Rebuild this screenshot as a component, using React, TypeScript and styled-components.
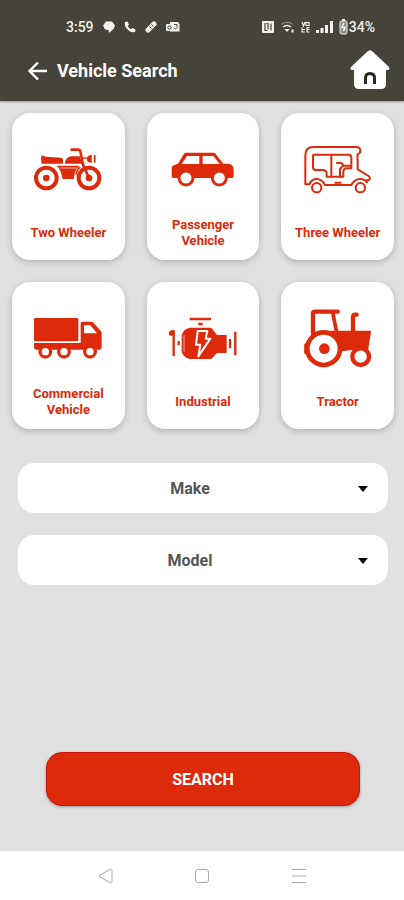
import React from "react";
import styled, { createGlobalStyle } from "styled-components";

const RED = "#dc2a0a";

const GlobalStyle = createGlobalStyle`
  *, *::before, *::after { box-sizing: border-box; }
  body { margin: 0; font-family: Roboto, "Liberation Sans", sans-serif; }
  button, select { font-family: inherit; }
`;

const Screen = styled.div`
  display: flex;
  flex-direction: column;
  min-height: 100vh;
  background: #e1e1e1;
`;

const Header = styled.header`
  background: #46433b;
  color: #fff;
  padding-top: 16px;
  box-shadow: 0 1px 2px rgba(0, 0, 0, 0.35);
`;

const StatusBar = styled.div`
  display: flex;
  align-items: center;
  justify-content: space-between;
  height: 22px;
  padding: 0 29px 0 66px;
  font-size: 14px;
  font-weight: 500;
  color: #f3f2ee;
`;

const StatusGroup = styled.div<{ $gap: number }>`
  display: flex;
  align-items: center;
  gap: ${(p) => p.$gap}px;
`;

const TitleBar = styled.div`
  display: flex;
  align-items: center;
  height: 63px;
  padding: 0 14px 0 24px;
`;

const IconButton = styled.button`
  display: flex;
  align-items: center;
  justify-content: center;
  padding: 0;
  border: 0;
  background: none;
  color: inherit;
  cursor: pointer;
`;

const Title = styled.h1`
  flex: 1;
  margin: 0 0 0 5px;
  padding-top: 2px;
  font-size: 18px;
  line-height: 24px;
  font-weight: 700;
`;

const Main = styled.main`
  flex: 1;
  display: flex;
  flex-direction: column;
`;

const CardGrid = styled.div`
  display: grid;
  grid-template-columns: repeat(3, 1fr);
  gap: 22px;
  padding: 12px 10px 0 12px;
`;

const Card = styled.button`
  display: flex;
  flex-direction: column;
  align-items: center;
  gap: 11px;
  padding: 21px 8px 11px;
  border: 0;
  border-radius: 18px;
  background: #fff;
  color: ${RED};
  box-shadow: 0 2px 6px rgba(0, 0, 0, 0.22);
  cursor: pointer;
`;

const CardLabel = styled.span`
  display: flex;
  align-items: center;
  justify-content: center;
  min-height: 32px;
  font-size: 13px;
  line-height: 16px;
  font-weight: 700;
  text-align: center;
`;

const Fields = styled.div`
  display: flex;
  flex-direction: column;
  gap: 22px;
  padding: 34px 16px 0 18px;
`;

const Field = styled.label`
  position: relative;
  display: block;
`;

const Select = styled.select`
  display: block;
  width: 100%;
  height: 50px;
  padding: 0 44px 0 18px;
  border: 0;
  border-radius: 16px;
  background: #fff;
  color: #555;
  font-size: 16px;
  font-weight: 700;
  text-align: center;
  text-align-last: center;
  appearance: none;
`;

const Caret = styled.svg`
  position: absolute;
  right: 20px;
  top: 23px;
  pointer-events: none;
`;

const SearchButton = styled.button`
  height: 54px;
  margin: auto 44px 45px 46px;
  border: 1px solid #cf1206;
  border-radius: 16px;
  background: ${RED};
  color: #fff;
  font-size: 16px;
  font-weight: 700;
  box-shadow: 0 1px 3px rgba(0, 0, 0, 0.35);
  cursor: pointer;
`;

const SystemNav = styled.nav`
  display: flex;
  align-items: center;
  justify-content: center;
  gap: 73px;
  height: 49px;
  background: #fff;
  color: #aaa;
`;

const BikeIcon = () => (
  <svg width="72" height="72" viewBox="96 87 216 216" fill="none" stroke="currentColor" aria-hidden="true">
    <circle cx="139" cy="219" r="31" strokeWidth="12" />
    <circle cx="139" cy="219" r="10" fill="currentColor" stroke="none" />
    <circle cx="267" cy="219" r="31" strokeWidth="12" />
    <circle cx="267" cy="219" r="10" fill="currentColor" stroke="none" />
    <path d="M215 134h20q5 0 6 5l8 40 18 40" strokeWidth="8" strokeLinecap="round" strokeLinejoin="round" />
    <path d="M125 151q11 6 24 5l35 2q5 1 5 6v12h-64q-5-12 0-25z" fill="currentColor" stroke="none" />
    <path d="M195 176q0-18 17-22h28l6 22z" fill="currentColor" stroke="none" />
    <path d="M170 182h69q-13 9-15 24l-3 16h-33l-6-22q-4-12-12-18z" fill="currentColor" stroke="none" />
    <path d="M181 189h49" stroke="#fff" strokeWidth="2" />
    <path d="M241 187q-11 5-12 22" strokeWidth="5" />
    <path d="M275 149v25q-15-1-15-12t15-13z" fill="currentColor" stroke="none" />
    <path d="M284 150v23" strokeWidth="5" />
    <path d="M246 159h14" strokeWidth="4" />
  </svg>
);

const CarIcon = () => (
  <svg width="72" height="72" viewBox="96 87 216 216" aria-hidden="true">
    <path
      fill="currentColor"
      fillRule="evenodd"
      d="M153 143h81q5 0 8 4l23 29h13q18 1 18 18v20q0 5-5 5H115q-5 0-5-5v-23q0-10 10-12l9-3 17-28q2-5 7-5zm3 10-16 24h53v-24zm47 0v24h51l-19-24z"
    />
    <g fill="#fff" stroke="currentColor" strokeWidth="9">
      <circle cx="153" cy="219" r="21" />
      <circle cx="253" cy="219" r="21" />
    </g>
  </svg>
);

const RickshawIcon = () => (
  <svg
    width="72"
    height="72"
    viewBox="96 87 216 216"
    fill="none"
    stroke="currentColor"
    strokeWidth="6"
    strokeLinejoin="round"
    strokeLinecap="round"
    aria-hidden="true"
  >
    <path d="M118 238h-12v-87q0-25 24-25h129q12 0 12 12 0 7-9 10l1 22v23l33 20q5 4 3 10l-5 3h-5" />
    <path d="M118 238q7-16 22-16t25 18h79q10-18 26-18 15 0 21 10" />
    <circle cx="140" cy="248" r="14" />
    <circle cx="271" cy="248" r="14" />
    <path d="M131 149h104q9 0 9 9v32h-14q-10 0-10 11v14h-50v-8q0-12-13-12h-20q-8 0-8-8v-35q0-3 2-3z" />
    <path d="M184 149v66M196 233h16M201 174h12q6 1 6 8l-9 10v23M219 182h24" />
  </svg>
);

const TruckIcon = () => (
  <svg width="72" height="72" viewBox="96 84 216 216" aria-hidden="true">
    <g fill="currentColor">
      <rect x="102" y="129" width="133" height="70" rx="4" />
      <path
        fillRule="evenodd"
        d="M242 145q0-5 5-5h27q3 0 6 3l22 24q3 3 3 8v40q0 9-8 9H109q-6 0-7-7v-13h140zm10 6v24h39l-20-24z"
      />
    </g>
    <g fill="#fff" stroke="currentColor" strokeWidth="10">
      <circle cx="136" cy="230" r="16" />
      <circle cx="192" cy="230" r="16" />
      <circle cx="270" cy="230" r="16" />
    </g>
  </svg>
);

const EngineIcon = () => (
  <svg width="72" height="72" viewBox="96 84 216 216" fill="none" stroke="currentColor" aria-hidden="true">
    <path d="M163 158h66l17 22h29v54h-29l-17 18h-66q-20-8-23-22v-48q3-18 23-24z" fill="currentColor" stroke="none" />
    <path d="M147 181v49" stroke="#fff" strokeWidth="2" />
    <path d="M188 168h29l-5 23h14l-36 53 6-35h-13z" stroke="#fff" strokeWidth="6" strokeLinejoin="round" />
    <path d="M164 132h64M116 170v74M301 170v71" strokeWidth="7" />
    <path d="M102 180v-8q3-8 17-7v10l-9 9z" fill="currentColor" stroke="none" />
    <path d="M190 147h13M131 198v13M285 192v28" strokeWidth="7" />
  </svg>
);

const TractorIcon = () => (
  <svg width="72" height="72" viewBox="96 84 216 216" fill="none" stroke="currentColor" aria-hidden="true">
    <path
      d="M129 176v-60q0-6 6-6h68"
      strokeWidth="13"
      strokeLinecap="round"
      strokeLinejoin="round"
    />
    <path d="M188 112l12 60" strokeWidth="11" />
    <path d="M249 172v-46q0-7 7-7h4" strokeWidth="13" strokeLinecap="round" />
    <path d="M180 167h121q2 0 2 4l-9 55h-56l-22 3z" fill="currentColor" stroke="none" />
    <circle cx="161" cy="221" r="49" fill="#fff" strokeWidth="14" />
    <path d="M107 209v24" strokeWidth="9" strokeLinecap="round" />
    <circle cx="163" cy="221" r="16" fill="currentColor" stroke="none" />
    <circle cx="272" cy="245" r="25" fill="#fff" strokeWidth="13" />
  </svg>
);

const HomeIcon = () => (
  <svg width="40" height="40" viewBox="0 0 40 40" aria-hidden="true">
    <path
      d="M18 1q2-1.500 4 0l17 16q1.500 3-1.500 3H36v14q0 5-5 5H9q-5 0-5-5V20H2.500Q-.5 20 1 17z"
      fill="#fff"
    />
    <path d="M15.500 34v-6q0-4.500 4.500-4.500t4.500 4.500v6" fill="none" stroke="#292720" strokeWidth="3" />
  </svg>
);

const LeftStatusIcons = () => (
  <>
    <svg width="12" height="12" viewBox="0 0 12 12" fill="currentColor" aria-hidden="true">
      <path d="M3 .5h6l3 4L10.500 8 6 12l-.5-3L2 8.500 0 4.500z" />
    </svg>
    <svg width="12" height="12" viewBox="0 0 12 12" fill="currentColor" aria-hidden="true">
      <path d="M1 1l2.500-.5L5 3.500 3.800 5q1 2.200 3.200 3.200L8.500 7l3 1.500L11 11Q7 12 3.500 8.500T1 1z" />
    </svg>
    <svg width="12" height="12" viewBox="0 0 12 12" fill="none" stroke="currentColor" aria-hidden="true">
      <path d="M3 9l6-6" strokeWidth="5" strokeLinecap="round" />
      <path d="M4.500 5.500l2 2M6.500 3.500l2 2" stroke="#46433b" strokeWidth="1" />
    </svg>
    <svg width="14" height="12" viewBox="0 0 14 12" fill="currentColor" aria-hidden="true">
      <path d="M4 1h8l1.500 2v7.500H4z" />
      <rect x="0" y="3" width="7" height="7" rx="1" />
      <circle cx="3.500" cy="6.500" r="1.700" fill="none" stroke="#46433b" />
      <path d="M8 3.500h3v3L9.500 8 8 7" fill="none" stroke="#46433b" />
    </svg>
  </>
);

const NfcIcon = () => (
  <svg width="12" height="12" viewBox="0 0 12 12" aria-hidden="true">
    <rect width="12" height="12" rx="1" fill="currentColor" />
    <path d="M3 2v7.500h2.500M4.500 2.500h1.500v6M9 9.500V2.500" fill="none" stroke="#46433b" strokeWidth="1.200" />
  </svg>
);

const WifiIcon = () => (
  <svg width="15" height="12" viewBox="0 0 15 12" fill="none" stroke="currentColor" aria-hidden="true">
    <path d="M1 3.500q6-4.500 12 0" opacity="0.45" />
    <path d="M3 6q4-3 8 0" strokeWidth="1.400" />
    <path d="M4.500 8h5L7 11z" fill="currentColor" stroke="none" />
    <path d="M12.500 8.500v3" strokeWidth="2" />
  </svg>
);

const VolteIcon = () => (
  <svg width="9" height="12" viewBox="0 0 9 12" fill="none" stroke="currentColor" aria-hidden="true">
    <path d="M1 1l1.500 4L4 1M5 1.500h3v3H5zM1 6.500v4.500h3M1 8.500h3M5.500 6.500h3M5.500 8.500h3M5.500 11h3M6 6v5" strokeWidth="1.200" />
  </svg>
);

const SignalIcon = () => (
  <svg width="17" height="12" viewBox="0 0 17 12" fill="currentColor" aria-hidden="true">
    <path d="M0 9h3v3H0zM4.500 7h3v5h-3zM9 4h3v8H9zM14 0h3v12h-3z" />
  </svg>
);

const BatteryIcon = () => (
  <svg width="9" height="16" viewBox="0 0 9 16" aria-hidden="true">
    <path d="M3 0h3v2H3z" fill="currentColor" />
    <rect x="1" y="2" width="7" height="13" rx="1.500" fill="#8c8a83" stroke="currentColor" />
    <path d="M5 4L3 8.500h3L4.500 12" fill="none" stroke="#fff" strokeWidth="1.500" />
  </svg>
);

const vehicles = [
  { label: ["Two Wheeler"], Icon: BikeIcon },
  { label: ["Passenger", "Vehicle"], Icon: CarIcon },
  { label: ["Three Wheeler"], Icon: RickshawIcon },
  { label: ["Commercial", "Vehicle"], Icon: TruckIcon },
  { label: ["Industrial"], Icon: EngineIcon },
  { label: ["Tractor"], Icon: TractorIcon },
];

const DropDown = ({ name }: { name: string }) => (
  <Field>
    <Select aria-label={name} defaultValue="">
      <option value="">{name}</option>
    </Select>
    <Caret width="10" height="6" viewBox="0 0 10 6" aria-hidden="true">
      <path d="M0 0h10L5 6z" fill="#000" />
    </Caret>
  </Field>
);

export default function App() {
  return (
    <Screen>
      <GlobalStyle />
      <Header>
        <StatusBar>
          <StatusGroup $gap={9}>
            <span>3:59</span>
            <LeftStatusIcons />
          </StatusGroup>
          <StatusGroup $gap={6}>
            <NfcIcon />
            <WifiIcon />
            <VolteIcon />
            <SignalIcon />
            <StatusGroup $gap={1}>
              <BatteryIcon />
              <span>34%</span>
            </StatusGroup>
          </StatusGroup>
        </StatusBar>
        <TitleBar>
          <IconButton aria-label="Back">
            <svg width="28" height="28" viewBox="0 0 28 28" fill="none" stroke="currentColor" strokeWidth="2.400" aria-hidden="true">
              <path d="M23 15H6M14 6.500L5.500 15l8.500 8.500" />
            </svg>
          </IconButton>
          <Title>Vehicle Search</Title>
          <IconButton aria-label="Home">
            <HomeIcon />
          </IconButton>
        </TitleBar>
      </Header>
      <Main>
        <CardGrid>
          {vehicles.map(({ label, Icon }) => (
            <Card key={label.join(" ")}>
              <Icon />
              <CardLabel>
                <span>
                  {label.map((line, i) => (
                    <React.Fragment key={line}>
                      {i > 0 && <br />}
                      {line}
                    </React.Fragment>
                  ))}
                </span>
              </CardLabel>
            </Card>
          ))}
        </CardGrid>
        <Fields>
          <DropDown name="Make" />
          <DropDown name="Model" />
        </Fields>
        <SearchButton>SEARCH</SearchButton>
      </Main>
      <SystemNav aria-label="System">
        <IconButton aria-label="System back">
          <svg width="24" height="24" viewBox="0 0 24 24" fill="none" stroke="currentColor" strokeLinejoin="round" aria-hidden="true">
            <path d="M19 6.500v11q0 2-2 1L7 13q-1.500-1 0-2l10-5.500q2-1 2 1z" />
          </svg>
        </IconButton>
        <IconButton aria-label="System home">
          <svg width="24" height="24" viewBox="0 0 24 24" fill="none" stroke="currentColor" aria-hidden="true">
            <rect x="5.500" y="5.500" width="13" height="13" rx="2.500" />
          </svg>
        </IconButton>
        <IconButton aria-label="Recent apps">
          <svg width="24" height="24" viewBox="0 0 24 24" fill="none" stroke="currentColor" aria-hidden="true">
            <path d="M5 5.500h14M5 12h14M5 18.500h14" />
          </svg>
        </IconButton>
      </SystemNav>
    </Screen>
  );
}
